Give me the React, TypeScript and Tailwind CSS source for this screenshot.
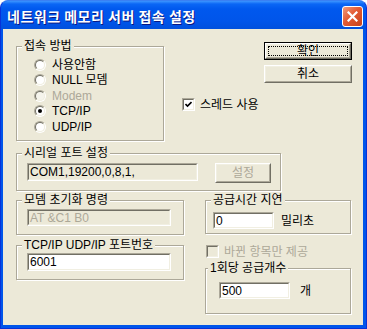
import { ReactNode } from "react";

const GroupBox = ({
  label,
  className,
  legendClass = "ml-[5px]",
  children,
}: {
  label: string;
  className?: string;
  legendClass?: string;
  children?: ReactNode;
}) => (
  <fieldset
    className={`border border-[#ACA899] shadow-[inset_1px_1px_0_#fff,1px_1px_0_#fff] ${className ?? ""}`}
  >
    <legend className={`px-[2px] bg-[#ECE9D8] leading-[14px] ${legendClass}`}>{label}</legend>
    {children}
  </fieldset>
);

const Field = ({
  value,
  className,
  grey,
  dim,
}: {
  value: string;
  className?: string;
  grey?: boolean; // same face colour as dialog (readonly / disabled)
  dim?: boolean; // disabled text
}) => (
  <div
    className={`border border-t-[#ACA899] border-l-[#ACA899] border-r-white border-b-white ${className ?? ""}`}
  >
    <div
      className={`h-full border border-t-[#716F64] border-l-[#716F64] border-r-[#F1EFE2] border-b-[#F1EFE2] pl-[1px] flex items-center leading-none ${
        grey ? "bg-[#ECE9D8]" : "bg-white"
      } ${dim ? "text-[#ACA899]" : "text-black"}`}
    >
      {value}
    </div>
  </div>
);

const Button = ({
  label,
  className,
  isDefault,
  disabled,
}: {
  label: string;
  className?: string;
  isDefault?: boolean;
  disabled?: boolean;
}) => (
  <div className={`${isDefault ? "border border-black" : ""} ${className ?? ""}`}>
    <div className="h-full border border-t-white border-l-white border-r-[#716F64] border-b-[#716F64]">
      <div className="h-full border border-t-[#F1EFE2] border-l-[#F1EFE2] border-r-[#ACA899] border-b-[#ACA899] flex items-center justify-center">
        <span
          className={`flex items-center justify-center ${
            isDefault ? "outline-1 outline-dotted outline-black w-[calc(100%-4px)] h-[calc(100%-4px)]" : ""
          } ${disabled ? "text-[#ACA899]" : "text-black"}`}
        >
          {label}
        </span>
      </div>
    </div>
  </div>
);

const Radio = ({ checked, disabled }: { checked?: boolean; disabled?: boolean }) => (
  <span className="inline-block w-[12px] h-[12px] rounded-full border border-t-[#ACA899] border-l-[#ACA899] border-r-white border-b-white shrink-0">
    <span
      className={`flex items-center justify-center w-full h-full rounded-full border border-t-[#716F64] border-l-[#716F64] border-r-[#F1EFE2] border-b-[#F1EFE2] ${
        disabled ? "bg-[#F5F4EC]" : "bg-white"
      }`}
    >
      {checked && <span className="w-[4px] h-[4px] rounded-full bg-black" />}
    </span>
  </span>
);

const CheckBox = ({ checked, disabled }: { checked?: boolean; disabled?: boolean }) => (
  <span className="inline-block w-[13px] h-[13px] border border-t-[#ACA899] border-l-[#ACA899] border-r-white border-b-white shrink-0">
    <span
      className={`flex items-center justify-center w-full h-full border border-t-[#716F64] border-l-[#716F64] border-r-[#F1EFE2] border-b-[#F1EFE2] ${
        disabled ? "bg-[#ECE9D8]" : "bg-white"
      }`}
    >
      {checked && (
        <svg width="7" height="7" viewBox="0 0 7 7">
          <path d="M0.5 3 L2.5 5 L6.5 1" fill="none" stroke="#000" strokeWidth="1.6" />
        </svg>
      )}
    </span>
  </span>
);

const radios = [
  { label: "사용안함" },
  { label: "NULL 모뎀" },
  { label: "Modem", disabled: true },
  { label: "TCP/IP", checked: true },
  { label: "UDP/IP" },
];

export default function App() {
  return (
    <div className="w-[367px] h-[329px] flex flex-col rounded-t-[8px] bg-[#0055EA] border border-[#0831D9] border-t-[#3A80F3] font-['Liberation_Sans','Noto_Sans_CJK_KR',sans-serif] text-[12px] overflow-hidden">
      {/* title bar */}
      <div className="h-[28px] flex items-center pl-[6px] pr-[3px] bg-[linear-gradient(180deg,#3D95FF_0px,#0A66F5_3px,#0058EE_8px,#0055EA_20px,#0050DD_28px)]">
        <span className="text-white font-bold text-[14px] tracking-[0.5px] leading-none font-['Noto_Sans_CJK_KR',sans-serif] [text-shadow:1px_1px_0_#0A1883] mt-[1px]">
          네트워크 메모리 서버 접속 설정
        </span>
        <div className="ml-auto w-[21px] h-[21px] mt-[5px] rounded-[3px] border border-white bg-[linear-gradient(135deg,#F29B7C_0%,#E35A33_45%,#C8431D_100%)] flex items-center justify-center self-start">
          <svg width="11" height="11" viewBox="0 0 11 11">
            <path d="M1.5 1.5 L9.5 9.5 M9.5 1.5 L1.5 9.5" stroke="#fff" strokeWidth="2.2" strokeLinecap="square" />
          </svg>
        </div>
      </div>

      {/* client area */}
      <div className="flex-1 ml-[2px] mr-[3px] mb-[3px] bg-[#ECE9D8] text-black flex flex-col">
        <div className="flex pt-[10px] pl-[13px]">
          <GroupBox label="접속 방법" className="w-[148px] h-[102px]">
            <div className="flex flex-col pl-[17px] mt-[4px]">
              {radios.map((r) => (
                <div key={r.label} className="h-[15.5px] flex items-center gap-[6px]">
                  <Radio checked={r.checked} disabled={r.disabled} />
                  <span className={`leading-none ${r.disabled ? "text-[#ACA899]" : ""}`}>{r.label}</span>
                </div>
              ))}
            </div>
          </GroupBox>
          <div className="ml-[18px] mt-[59px] flex items-center gap-[5px] h-[13px]">
            <CheckBox checked />
            <span className="leading-none">스레드 사용</span>
          </div>
          <div className="ml-auto mr-[11px] mt-[3px] flex flex-col gap-[5px]">
            <Button label="확인" isDefault className="w-[88px] h-[18px]" />
            <Button label="취소" className="w-[88px] h-[18px]" />
          </div>
        </div>

        <div className="pl-[13px] mt-[5px]">
          <GroupBox label="시리얼 포트 설정" className="w-[265px] h-[45px]">
            <div className="flex items-start mt-[3px] pl-[10px]">
              <Field value="COM1,19200,0,8,1," grey className="w-[171px] h-[18px]" />
              <Button label="설정" disabled className="ml-[17px] w-[56px] h-[20px]" />
            </div>
          </GroupBox>
        </div>

        <div className="flex pl-[13px] mt-[2px]">
          <div className="flex flex-col w-[168px]">
            <GroupBox label="모뎀 초기화 명령" className="h-[42px]">
              <Field value="AT &C1 B0" grey dim className="mt-[2px] ml-[10px] w-[144px] h-[17px]" />
            </GroupBox>
            <GroupBox label="TCP/IP UDP/IP 포트번호" className="h-[42px] mt-[3px]">
              <Field value="6001" className="mt-[1px] ml-[10px] w-[144px] h-[18px]" />
            </GroupBox>
          </div>
          <div className="flex flex-col w-[146px] ml-[21px]">
            <GroupBox label="공급시간 지연" className="h-[41px]">
              <div className="flex items-center mt-[5px] ml-[7px] gap-[7px]">
                <Field value="0" className="w-[61px] h-[17px]" />
                <span className="leading-none">밀리초</span>
              </div>
            </GroupBox>
            <div className="flex items-center gap-[5px] mt-[11px] ml-[1px] h-[13px]">
              <CheckBox disabled />
              <span className="leading-none text-[#ACA899]">바뀐 항목만 제공</span>
            </div>
            <GroupBox label="1회당 공급개수" legendClass="ml-[2px]" className="h-[53px] mt-[3px]">
              <div className="flex items-center mt-[7px] ml-[13px] gap-[10px]">
                <Field value="500" className="w-[71px] h-[17px]" />
                <span className="leading-none">개</span>
              </div>
            </GroupBox>
          </div>
        </div>
      </div>
    </div>
  );
}
